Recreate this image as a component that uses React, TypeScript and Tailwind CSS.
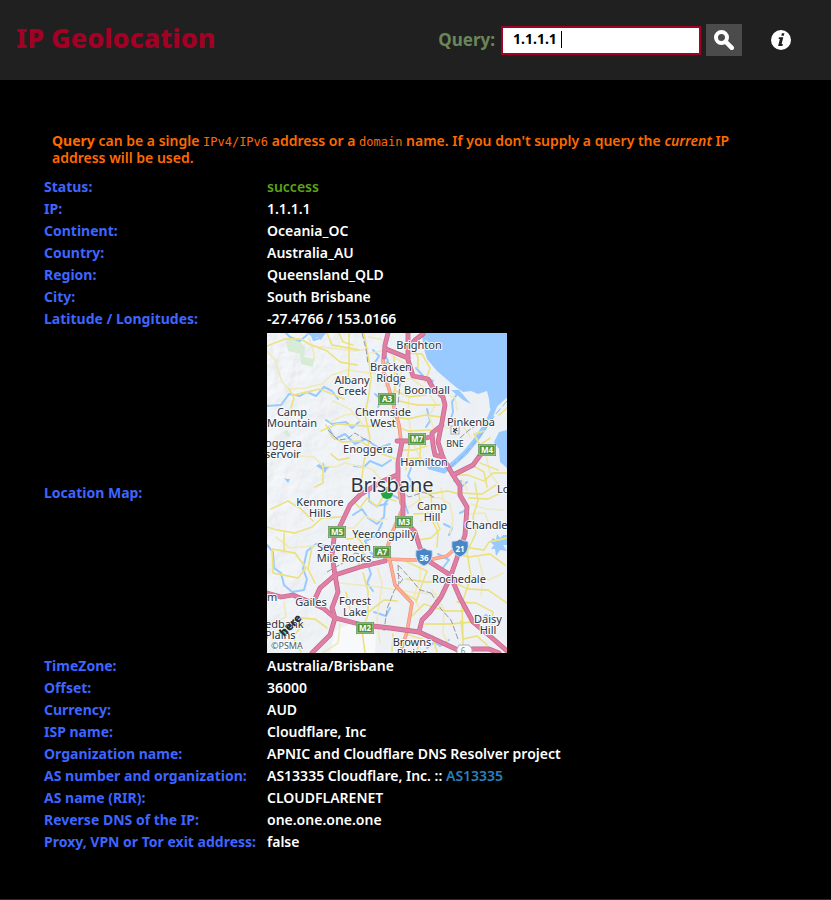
import React, { useState } from "react";

const PINK_ROADS = [
  "M121 0 L118 12 L117 24",
  "M119 16 L141 25",
  "M156 1 L148 7 L141 15 L141 27 L146 43 L161 46 L166 55 L176 64 L178 72 L175 89 L171 109 L176 125 L186 142 L193 153 L193 162 L200 174 L198 202 L191 222 L183 245 L174 264 L163 279 L155 287 L152 299",
  "M141 0 L141 15",
  "M175 92 L165 100 L166 112 L168 122 L176 124",
  "M130 108 L145 108 L163 104",
  "M214 121 L206 132 L186 142",
  "M135 109 L131 130 L131 147 L136 162 L136 185 L148 199 L153 215 L163 229 L183 242 L193 265 L206 289 L224 304 L240 318",
  "M130 142 L116 148 L104 155 L93 162 L83 172 L75 189 L67 205 L65 222 L68 242 L71 259 L65 275 L68 285 L96 292 L123 295 L152 299 L180 312 L191 317",
  "M205 316 L222 316 L232 320",
  "M0 260 L14 264 L26 262 L38 267 L56 275 L68 285 L63 302 L45 320",
  "M46 270 L53 255 L68 242 L93 234 L118 228",
];

const ORANGE_ROADS = [
  "M116 26 L117 40 L122 56 L127 74 L132 92 L134 108",
  "M118 226 L146 227 L166 226 L180 223 L190 214",
  "M135 177 L125 200 L119 218 L123 228 L128 252 L145 270 L140 299 L133 320",
  "M131 150 L134 170",
  "M96 232 L108 230",
];

const YELLOW_ROADS = [
  "M0 13 L18 6 L34 6 L42 11 L60 18 L73 29 L90 32",
  "M0 18 L8 27 L15 49 L22 56 L38 55 L55 51 L65 42 L80 37 L110 41",
  "M22 56 L27 65 L24 75",
  "M27 62 L53 56 L77 66",
  "M42 5 L47 20 L47 28 M45 13 L88 18 L101 16",
  "M60 0 L65 12 L92 17 M72 0 L76 9 L86 12",
  "M82 0 L82 32 L81 50 M97 0 L102 28 L104 45 L102 61 L98 82 L103 105 L97 128 L93 160",
  "M66 68 L83 76 L98 94 M63 89 L78 82 L94 80",
  "M59 92 L65 104 L75 109 L93 108 L115 121 L132 127",
  "M54 98 L70 91 L99 93 L125 94",
  "M31 123 L47 124 L56 133 L69 134 L78 130 L105 136 L117 150",
  "M56 133 L56 150 L48 154 M64 121 L71 127 L82 125",
  "M0 194 L10 197 L28 200 L45 194 L55 185 L75 184",
  "M9 204 L23 215 L54 212 L60 227",
  "M5 216 L28 220 L39 235 L31 245 L6 240 Z",
  "M17 200 L17 219 M45 214 L41 236 L48 250",
  "M73 195 L87 195 L98 183 L110 188 L120 186",
  "M80 206 L91 205 L98 214 L91 234",
  "M86 168 L93 175 L100 165 L110 174 L116 164 L129 168",
  "M72 250 L92 252 L112 254 L150 260 L170 261",
  "M96 240 L101 258 L101 282 L95 297 L98 320",
  "M79 259 L84 281 L99 281 L117 267 L130 268",
  "M111 236 L115 251 L110 287 L113 310",
  "M138 228 L160 238 L155 251 L149 269",
  "M147 181 L166 180 L173 196 L164 205 L151 207",
  "M141 175 L156 164 L174 165 L183 171 L186 187 L183 200",
  "M142 156 L162 161 L181 158 L192 161",
  "M151 155 L154 175 M164 154 L165 187 L171 199 L170 214",
  "M174 155 L178 174 L170 185 M153 188 L165 188",
  "M192 160 L215 161 L229 152 M202 165 L221 166 L236 159",
  "M208 150 L211 167 L206 184 L209 200 L200 219 L204 244 L195 270 L196 306",
  "M198 181 L218 180 L222 191 M204 171 L219 176 L236 177",
  "M196 214 L217 217 L222 209 L240 205",
  "M190 221 L202 224 L223 221 L238 232",
  "M205 243 L222 247 L236 240 M211 223 L216 243 L214 263",
  "M184 248 L201 256 L221 257 L240 270",
  "M190 269 L209 270 L226 279 L224 298",
  "M154 228 L153 245 L147 264 L153 277",
  "M139 246 L159 249 L178 249 M137 260 L149 267",
  "M145 283 L157 271 L178 278 L197 278",
  "M165 257 L177 276 L176 301 L181 309",
  "M158 291 L184 291 L205 289 M165 302 L170 319",
  "M196 306 L210 303 L220 312 M194 288 L197 318",
  "M102 4 L117 7 M103 20 L115 18 M125 23 L137 30 L132 46 L117 53",
  "M119 32 L130 34 L142 33 M127 24 L128 57 L122 67",
  "M145 13 L151 24 L151 35 M143 20 L155 21 L163 35 L158 49",
  "M125 45 L145 46 L159 56 L169 71 L162 83 L168 98",
  "M127 57 L142 64 L159 62 M132 68 L150 72 L173 72",
  "M122 83 L141 86 L158 82 L174 84",
  "M142 62 L141 79 L144 100 L148 115 L156 129",
  "M126 92 L141 98 L164 97 M133 117 L147 117 L160 113",
  "M135 126 L154 125 M143 107 L139 137 M154 105 L153 123",
  "M180 61 L188 65 L190 77 M177 95 L196 93 L204 105",
  "M188 142 L201 142 L217 148 L226 140 L240 140",
  "M205 132 L217 139 L220 154 M213 130 L231 137",
  "M195 146 L200 157 M219 123 L223 140 L231 151",
  "M232 82 L240 75 M217 98 L207 101 L213 112 L223 105",
  "M34 285 L48 286 L60 295 M36 291 L26 304 L34 319",
  "M17 269 L19 284 L4 290 M73 291 L71 310 L56 320",
  "M126 301 L125 318 M139 301 L155 306 L149 320",
  "M4 176 L21 168 L34 176 L46 188",
];

const STREAMS = [
  "M40 2 L33 8 L23 4 L19 0 M45 0 L47 7 L53 5 L58 0",
  "M0 73 L14 72 L22 61 L33 63 L40 59 L49 63 L57 54 L65 58 L71 66",
  "M59 87 L65 91 L79 89 L85 95 L92 89",
  "M61 94 L68 106 L78 101 L88 111 L98 106 L112 115 L123 111",
  "M106 17 L112 23 L107 31 L112 36 M118 22 L121 28 L115 36",
  "M108 61 L115 67 L111 74",
  "M87 133 L97 134 L103 128 L115 133 L124 127",
  "M0 212 L6 219 L7 235 L14 240 L17 252 L25 259 L37 257 L40 246 L36 236 L40 218 L49 211 L60 213",
  "M86 182 L95 176 L101 185 L110 191 L117 184 L118 170 L125 162 L137 168 L141 180",
  "M93 154 L102 157 L102 168 L109 173 L120 171",
  "M101 232 L104 241 L100 250 L106 258 M107 279 L119 283 L123 275",
  "M115 190 L109 203 L98 208 L104 220 L112 224",
  "M144 135 L141 143 L146 151 L139 157",
  "M171 221 L182 227 L175 236 L182 239",
  "M190 61 L185 69 L186 79 L183 88",
  "M149 35 L157 44 L166 48 M159 94 L163 88 L160 76",
  "M187 148 L194 148 L193 155 L200 149",
  "M177 191 L185 195 L182 202 M193 180 L201 176",
  "M160 315 L168 309 L173 313 L182 307",
  "M212 288 L219 282 L224 287",
];

const RAILS = [
  "M95 0 L99 16 L101 31",
  "M61 97 L71 107 L80 106 L88 100 L97 106 L104 109",
  "M120 29 L128 34 L133 51 L131 72",
  "M133 158 L142 164 L157 159 L168 165",
  "M60 239 L76 230 L88 220 L112 225",
  "M131 232 L132 250 L127 258 L120 276 L117 298",
  "M131 232 L143 245 L153 257 L164 260",
  "M164 260 L174 276 L184 287 L191 306",
  "M193 105 L202 97 L216 88",
  "M130 240 L136 246 L131 253",
];

type Place = { x: number; y: number; t: string };

const PLACES: Place[] = [
  { x: 152, y: 16, t: "Brighton" },
  { x: 124, y: 38, t: "Bracken" },
  { x: 124, y: 49, t: "Ridge" },
  { x: 85, y: 51, t: "Albany" },
  { x: 85, y: 62, t: "Creek" },
  { x: 160, y: 61, t: "Boondall" },
  { x: 25, y: 83, t: "Camp" },
  { x: 25, y: 94, t: "Mountain" },
  { x: 116, y: 83, t: "Chermside" },
  { x: 116, y: 94, t: "West" },
  { x: 204, y: 93, t: "Pinkenba" },
  { x: 101, y: 120, t: "Enoggera" },
  { x: 157, y: 133, t: "Hamilton" },
  { x: 53, y: 173, t: "Kenmore" },
  { x: 53, y: 184, t: "Hills" },
  { x: 165, y: 177, t: "Camp" },
  { x: 165, y: 188, t: "Hill" },
  { x: 117, y: 205, t: "Yeerongpilly" },
  { x: 77, y: 218, t: "Seventeen" },
  { x: 77, y: 229, t: "Mile Rocks" },
  { x: 192, y: 250, t: "Rochedale" },
  { x: 44, y: 273, t: "Gailes" },
  { x: 88, y: 272, t: "Forest" },
  { x: 88, y: 283, t: "Lake" },
  { x: 221, y: 290, t: "Daisy" },
  { x: 221, y: 301, t: "Hill" },
  { x: 145, y: 313, t: "Browns" },
  { x: 145, y: 324, t: "Plains" },
];

// Names that begin at the map's left edge or run off its right one.
const EDGE_PLACES: Place[] = [
  { x: -2, y: 114, t: "oggera" },
  { x: -2, y: 125, t: "servoir" },
  { x: 0, y: 268, t: "m" },
  { x: -2, y: 295, t: "edbank" },
  { x: -2, y: 306, t: "Plains" },
  { x: 198, y: 196, t: "Chandle" },
  { x: 230, y: 160, t: "Lo" },
];

const SHIELDS: Place[] = [
  { x: 120, y: 66, t: "A3" },
  { x: 150, y: 106, t: "M7" },
  { x: 220, y: 117, t: "M4" },
  { x: 137, y: 189, t: "M3" },
  { x: 70, y: 199, t: "M5" },
  { x: 115, y: 219, t: "A7" },
  { x: 98, y: 295, t: "M2" },
];

function Roads({ paths, color, width }: { paths: string[]; color: string; width: number }) {
  return (
    <g fill="none" stroke={color} strokeWidth={width} strokeLinejoin="round" strokeLinecap="round">
      {paths.map((d) => (
        <path key={d} d={d} />
      ))}
    </g>
  );
}

function LocationMap() {
  return (
    <svg
      width="240"
      height="320"
      viewBox="0 0 240 320"
      role="img"
      aria-label="Map of Brisbane"
      className="block font-['Noto_Sans','Open_Sans',sans-serif] font-normal"
    >
      <defs>
        <filter id="relief" x="0" y="0" width="100%" height="100%">
          <feTurbulence type="fractalNoise" baseFrequency="0.05" numOctaves="4" seed="7" result="n" />
          <feDiffuseLighting in="n" surfaceScale="2" lightingColor="#f6f8fa" diffuseConstant="1.1">
            <feDistantLight azimuth="225" elevation="62" />
          </feDiffuseLighting>
        </filter>
        <linearGradient id="fade" x1="0" x2="1" y1="0" y2="0.3">
          <stop offset="0" stopColor="#fff" stopOpacity="0.65" />
          <stop offset="0.5" stopColor="#fff" stopOpacity="0.15" />
          <stop offset="1" stopColor="#fff" stopOpacity="0" />
        </linearGradient>
        <mask id="hills">
          <rect width="240" height="320" fill="url(#fade)" />
        </mask>
      </defs>
      <rect width="240" height="320" fill="#edf1f5" />
      <rect width="240" height="320" filter="url(#relief)" mask="url(#hills)" />
      <path
        d="M19 8 L29 5 L38 14 L37 24 L47 26 L46 34 L34 31 L33 21 L21 18 Z M16 99 L20 97 L24 103 L20 104 Z"
        fill="#d8ebd4"
      />
      <path d="M68 298 L85 290 L109 301 L108 320 L63 320 Z" fill="#f8f9fb" />
      <path
        d="M155 0 L156 13 L160 26 L170 38 L184 50 L190 55 L196 59 L204 58 L211 61 L220 58 L222 66 L223 76 L229 73 L234 67 L240 60 L240 0 Z"
        fill="#99caff"
      />
      <path d="M232 99 L240 97 L240 135 L233 129 L232 116 L227 109 Z" fill="#99caff" />
      <path
        d="M240 61 L228 72 L222 87 L211 104 L199 119 L187 130 L177 138 L163 134 L158 126"
        fill="none"
        stroke="#99caff"
        strokeWidth="5"
      />
      <path d="M240 68 L228 82 L215 101 L195 124 L180 137" fill="none" stroke="#80b5ec" strokeWidth="1" strokeDasharray="7 3" />
      <path
        d="M223 209 L226 205 L229 207 L230 201 L233 205 L236 202 L240 202 L240 212 L236 212 L240 218 L233 217 L229 223 L228 216 L224 216 L227 212 Z M49 133 L52 131 L55 133 L56 129 L58 133 L63 134 L60 136 L58 140 L54 136 Z M17 145 L20 146 L23 146 L21 150 Z M184 57 L192 57 L204 71 L196 67 Z M39 0 L58 0 L54 7 L50 4 L46 8 L44 3 Z"
        fill="#99caff"
      />
      <Roads paths={STREAMS} color="#99caff" width={2} />
      <Roads paths={YELLOW_ROADS} color="#efe9bc" width={1.6} />
      <Roads paths={YELLOW_ROADS.filter((_, i) => i % 3 !== 1)} color="#ebe17c" width={1.3} />
      <g fill="none" stroke="#9898a0" strokeWidth="1" strokeDasharray="6 2">
        {RAILS.map((d) => (
          <path key={d} d={d} />
        ))}
      </g>
      <Roads paths={ORANGE_ROADS} color="#e8907d" width={3.6} />
      <Roads paths={ORANGE_ROADS} color="#ffad93" width={2.4} />
      <Roads paths={PINK_ROADS} color="#c9668c" width={4.8} />
      <Roads paths={PINK_ROADS} color="#df7fa3" width={3.4} />
      <circle cx="120" cy="160" r="6" fill="#1ea548" />
      {SHIELDS.map((s) => (
        <g key={s.t}>
          <rect x={s.x - 9} y={s.y - 6} width="18" height="12" fill="#4f7f42" />
          <rect x={s.x - 8} y={s.y - 5} width="16" height="10" fill="#4f9638" stroke="#cfe2c8" strokeWidth="0.8" />
          <text x={s.x} y={s.y + 3} textAnchor="middle" fill="#fff" fontSize="8" fontWeight="700">
            {s.t}
          </text>
        </g>
      ))}
      {[
        { x: 157, y: 224, t: "36" },
        { x: 193, y: 215, t: "21" },
      ].map((s) => (
        <g key={s.t}>
          <path
            d={`M${s.x - 8} ${s.y - 7} Q${s.x - 4} ${s.y - 6} ${s.x} ${s.y - 9} Q${s.x + 4} ${s.y - 6} ${s.x + 8} ${s.y - 7} Q${s.x + 10} ${s.y + 5} ${s.x} ${s.y + 9} Q${s.x - 10} ${s.y + 5} ${s.x - 8} ${s.y - 7} Z`}
            fill="#4a85c5"
            stroke="#dbe7f3"
            strokeWidth="0.8"
          />
          <text x={s.x} y={s.y + 4} textAnchor="middle" fill="#fff" fontSize="8" fontWeight="700">
            {s.t}
          </text>
        </g>
      ))}
      <path d="M190 316 L192 312 H202 L205 316 V322 H190 Z" fill="#f7f9fa" stroke="#a9afb4" strokeWidth="1" />
      <text x="196" y="321" textAnchor="middle" fill="#7b8f85" fontSize="8">
        6
      </text>
      <rect x="184" y="93" width="8" height="8" fill="#fff" stroke="#999" strokeWidth="0.8" />
      <path d="M186 99 L190 95 M186 95.500 L190.500 98 M187 98 L189 100" stroke="#3b3f49" strokeWidth="1.2" fill="none" />
      <g fill="#2f3440" stroke="#f8fafc" strokeWidth="2" paintOrder="stroke" strokeLinejoin="round" fontSize="11">
        <g textAnchor="middle">
          {PLACES.map((p) => (
            <text key={`${p.t}${p.x}${p.y}`} x={p.x} y={p.y}>
              {p.t}
            </text>
          ))}
          <text x="188" y="114" fontSize="9">
            BNE
          </text>
          <text x="125" y="159" fontSize="20">
            Brisbane
          </text>
        </g>
        {EDGE_PLACES.map((p) => (
          <text key={`${p.t}${p.y}`} x={p.x} y={p.y}>
            {p.t}
          </text>
        ))}
      </g>
      <path d="M11 300 L17 296 L20 303 Z" fill="#48dad0" />
      <text x="17" y="304" transform="rotate(-45 17 304)" fill="#2a2e37" fontSize="11" fontWeight="900">
        here
      </text>
      <text x="4" y="316" fill="#555b66" stroke="#f8fafc" strokeWidth="2" paintOrder="stroke" fontSize="9">
        ©PSMA
      </text>
    </svg>
  );
}

type Row = { label: string; value: React.ReactNode };

const ROWS: Row[] = [
  { label: "Status:", value: <span className="text-[#5aa418]">success</span> },
  { label: "IP:", value: "1.1.1.1" },
  { label: "Continent:", value: "Oceania_OC" },
  { label: "Country:", value: "Australia_AU" },
  { label: "Region:", value: "Queensland_QLD" },
  { label: "City:", value: "South Brisbane" },
  { label: "Latitude / Longitudes:", value: "-27.4766 / 153.0166" },
  { label: "Location Map:", value: <LocationMap /> },
  { label: "TimeZone:", value: "Australia/Brisbane" },
  { label: "Offset:", value: "36000" },
  { label: "Currency:", value: "AUD" },
  { label: "ISP name:", value: "Cloudflare, Inc" },
  { label: "Organization name:", value: "APNIC and Cloudflare DNS Resolver project" },
  {
    label: "AS number and organization:",
    value: (
      <>
        AS13335 Cloudflare, Inc. ::{" "}
        <a href="#as13335" className="text-[#2980b9]">
          AS13335
        </a>
      </>
    ),
  },
  { label: "AS name (RIR):", value: "CLOUDFLARENET" },
  { label: "Reverse DNS of the IP:", value: "one.one.one.one" },
  { label: "Proxy, VPN or Tor exit address:", value: "false" },
];

function Header() {
  const [query, setQuery] = useState("1.1.1.1");
  return (
    <header className="flex h-20 items-center justify-between bg-[#202020] pr-10 pl-4">
      <h1 className="pb-1 text-[27px] leading-8 font-extrabold text-[#a20025]">IP Geolocation</h1>
      <form className="flex items-center" onSubmit={(e) => e.preventDefault()}>
        <label htmlFor="query" className="mr-1.5 text-[17px] font-bold text-[#6a8759]">
          Query:
        </label>
        <div className="relative mr-[5px]">
          <input
            id="query"
            value={query}
            onChange={(e) => setQuery(e.target.value)}
            className="block h-[29px] w-[200px] border-2 border-[#a20025] bg-white pb-1 pl-2.5 text-sm font-bold text-black outline-none"
          />
          <span className="absolute top-[5px] left-[60px] h-[17px] w-px bg-black" />
        </div>
        <button type="submit" aria-label="Search" className="flex h-8 w-9 items-center justify-center bg-[#4b4b4b]">
          <svg width="20" height="20" viewBox="0 0 20 20" fill="none" stroke="#fff">
            <circle cx="7.500" cy="7.500" r="5.500" strokeWidth="4" />
            <path d="M11.500 11.500 L17.800 17.800" strokeWidth="4.500" strokeLinecap="round" />
          </svg>
        </button>
        <button type="button" aria-label="Information" className="ml-[29px] block">
          <svg width="20" height="20" viewBox="0 0 20 20">
            <circle cx="10" cy="10" r="10" fill="#fff" />
            <path d="M10.900 3.300 h2.500 l-.600 2.500 h-2.500 z M8 7.300 h4.300 l-1.700 6.800 h1.300 l-.500 1.900 h-4.300 l1.800 -6.900 h-1.300 z" fill="#202020" />
          </svg>
        </button>
      </form>
    </header>
  );
}

export default function App() {
  return (
    <div className="min-h-screen border-b border-[#2b2b2b] bg-black font-['Noto_Sans','Open_Sans',sans-serif] text-sm">
      <Header />
      <main className="px-11 pt-13 pb-11">
        <p className="mb-2.5 px-2 leading-[17px] font-semibold text-[#ff6a00]">
          <strong className="font-bold">Query</strong> can be a single{" "}
          <code className="font-['DejaVu_Sans_Mono',monospace] text-xs leading-none font-normal">IPv4/IPv6</code> address or a{" "}
          <code className="font-['DejaVu_Sans_Mono',monospace] text-xs leading-none font-normal">domain</code> name. If you don't supply a
          query the <em>current</em> IP address will be used.
        </p>
        <table className="w-full border-collapse text-left">
          <tbody>
            {ROWS.map((row) => (
              <tr key={row.label}>
                <th scope="row" className="w-[223px] py-px pr-2 leading-5 font-bold whitespace-nowrap text-[#3e65ff]">
                  {row.label}
                </th>
                <td className="py-px leading-5 font-semibold text-white">
                  {row.label === "Location Map:" ? <div className="pt-0.5 pb-px">{row.value}</div> : row.value}
                </td>
              </tr>
            ))}
          </tbody>
        </table>
      </main>
    </div>
  );
}
